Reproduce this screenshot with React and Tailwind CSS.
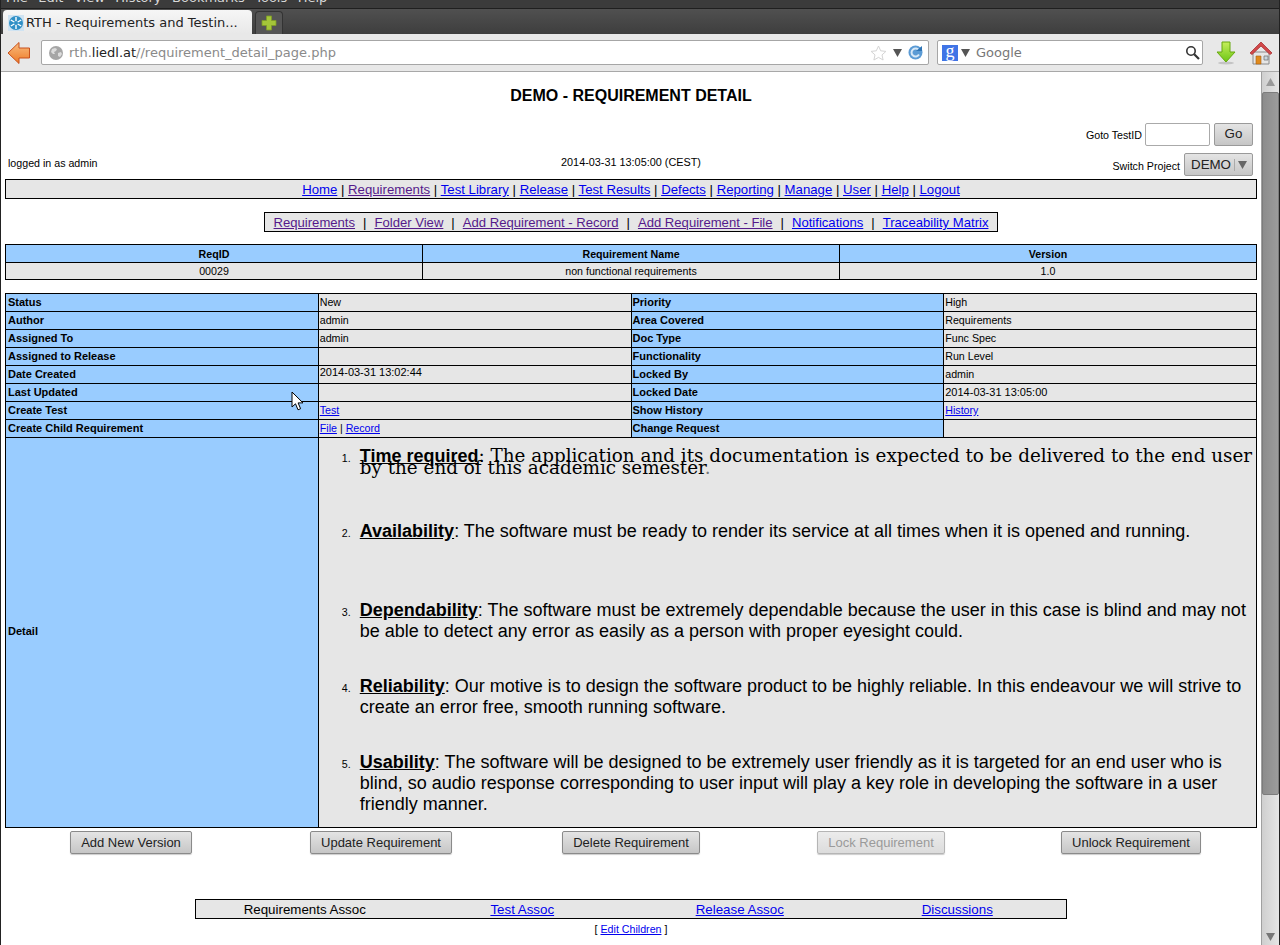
const SANS = 'font-["Liberation_Sans",Arial,sans-serif]';

const mainNav = [
  ['Home', false], ['Requirements', true], ['Test Library', false], ['Release', false], ['Test Results', false],
  ['Defects', false], ['Reporting', false], ['Manage', false], ['User', false], ['Help', false], ['Logout', false],
];

const subNav = [
  ['Requirements', true], ['Folder View', true], ['Add Requirement - Record', true],
  ['Add Requirement - File', true], ['Notifications', false], ['Traceability Matrix', false],
];

const detailRows = [
  ['Status', 'New', 'Priority', 'High'],
  ['Author', 'admin', 'Area Covered', 'Requirements'],
  ['Assigned To', 'admin', 'Doc Type', 'Func Spec'],
  ['Assigned to Release', '', 'Functionality', 'Run Level'],
  ['Date Created', <span key="c" className="inline-block text-[11px] -translate-y-[2px]">2014-03-31 13:02:44</span>, 'Locked By', 'admin'],
  ['Last Updated', '', 'Locked Date', <span key="l" className="text-[11px]">2014-03-31 13:05:00</span>],
  ['Create Test', <a key="t" className="text-[#0000ee] underline">Test</a>, 'Show History', <a key="h" className="text-[#0000ee] underline">History</a>],
  ['Create Child Requirement', <span key="f"><a className="text-[#0000ee] underline">File</a> | <a className="text-[#0000ee] underline">Record</a></span>, 'Change Request', ''],
];

const actions = [
  ['Add New Version', false], ['Update Requirement', false], ['Delete Requirement', false],
  ['Lock Requirement', true], ['Unlock Requirement', false],
];

const Favicon = () => (
  <svg width="16" height="16" viewBox="0 0 16 16" className="shrink-0">
    <rect width="16" height="16" fill="#cfe3f2" />
    <circle cx="8" cy="8" r="7" fill="#2f8fc6" />
    <path d="M8 2v12M2.800 5l10.400 6M2.800 11l10.400-6" stroke="#fff" strokeWidth="1.400" />
    <circle cx="8" cy="8" r="2" fill="#2f8fc6" />
  </svg>
);

const PlusIcon = () => (
  <svg width="16" height="16" viewBox="0 0 16 16">
    <path d="M5.500 1h5v4.500H15v5h-4.500V15h-5v-4.500H1v-5h4.500z" fill="#a4c639" stroke="#7f9c26" strokeWidth="0.800" />
  </svg>
);

const BackArrow = () => (
  <svg width="24" height="24" viewBox="0 0 24 24" className="shrink-0">
    <defs>
      <linearGradient id="backFill" x1="0" y1="0" x2="0" y2="1">
        <stop offset="0" stopColor="#f9bd80" />
        <stop offset="1" stopColor="#ee7a26" />
      </linearGradient>
    </defs>
    <path d="M1 12 12 1.500v5.500h10.500v10H12v5.500z" fill="url(#backFill)" stroke="#c8501c" strokeWidth="1" />
  </svg>
);

const Globe = () => (
  <svg width="14" height="14" viewBox="0 0 14 14">
    <circle cx="7" cy="7" r="7" fill="#a6a6a6" />
    <path d="M3 3l3-1 2 1-1 2-2 1 1 2-2 0-2-2zM9 7l3-1 1 2-2 3-2-1z" fill="#dcdcdc" />
  </svg>
);

const Star = () => (
  <svg width="17" height="16" viewBox="0 0 17 16">
    <path d="M8.500 1l2.200 4.800 5.200.6-3.900 3.500 1.100 5.100-4.600-2.600L3.900 15 5 9.900 1.100 6.400l5.200-.6z" fill="#fff" stroke="#d4d4d4" />
  </svg>
);

const Caret = ({ color = '#555' }) => (
  <svg width="9" height="8" viewBox="0 0 9 8">
    <path d="M0 0h9L4.500 8z" fill={color} />
  </svg>
);

const Reload = () => (
  <svg width="15" height="15" viewBox="0 0 15 15">
    <circle cx="7.500" cy="7.500" r="7" fill="#5b9bd5" />
    <path d="M11 5.500a4 4 0 1 0 0 4" fill="none" stroke="#d7e8f7" strokeWidth="2" />
    <path d="M8 6h6V1z" fill="#2f75b5" />
  </svg>
);

const SearchIcon = () => (
  <svg width="15" height="15" viewBox="0 0 15 15">
    <circle cx="6" cy="6" r="4.200" fill="#fff" stroke="#333" strokeWidth="1.600" />
    <path d="M9.200 9.200 14 14" stroke="#333" strokeWidth="2.200" />
  </svg>
);

const DownArrow = () => (
  <svg width="20" height="24" viewBox="0 0 20 24" className="shrink-0">
    <defs>
      <linearGradient id="downFill" x1="0" y1="0" x2="0" y2="1">
        <stop offset="0" stopColor="#c6ee5a" />
        <stop offset="1" stopColor="#6cc614" />
      </linearGradient>
    </defs>
    <ellipse cx="10" cy="22" rx="8" ry="1.500" fill="#c4c4c4" />
    <path d="M6 1h8v10h5L10 21 1 11h5z" fill="url(#downFill)" stroke="#66a80f" />
  </svg>
);

const HomeIcon = () => (
  <svg width="24" height="24" viewBox="0 0 24 24" className="shrink-0">
    <path d="M4 11h16v12H4z" fill="#e6e6e6" stroke="#8a8a8a" />
    <path d="M1 12 12 1l11 11-2 1.500L12 5l-9 8.500z" fill="#d2484a" stroke="#a83234" strokeWidth="0.800" />
    <path d="M7 15h5v8H7z" fill="#e08a1c" stroke="#a86010" strokeWidth="0.600" />
    <path d="M15 15h4v4h-4z" fill="#c9d6de" stroke="#777" strokeWidth="0.800" />
  </svg>
);

const Cursor = () => (
  <svg width="14" height="21" viewBox="0 0 14 21">
    <path d="M1 1v15l3.500-3.200 2.500 6 2.600-1.100-2.500-5.800H12z" fill="#fff" stroke="#000" strokeWidth="1" />
  </svg>
);

const ActionButton = ({ label, disabled }) => (
  <button className={`h-[23px] px-[10px] border rounded-[2px] text-[13px] bg-gradient-to-b shadow-[0_1px_1px_rgba(0,0,0,0.2)] ${disabled ? 'border-[#b5b5b5] from-[#ececec] to-[#dcdcdc] text-[#9a9a9a]' : 'border-[#8a8a8a] from-[#e4e4e4] to-[#c6c6c6] text-[#222]'}`}>
    {label}
  </button>
);

const BrowserChrome = () => (
  <div className={`shrink-0 font-["DejaVu_Sans",sans-serif]`}>
    <div className="h-[9px] overflow-hidden bg-[#3b3b3b] border-b border-[#1f1f1f]">
      <div className="flex gap-[10.5px] pl-[5px] -mt-[10px] text-[13px] leading-[15px] text-[#d8d8d8]">
        {['File', 'Edit', 'View', 'History', 'Bookmarks', 'Tools', 'Help'].map((m) => (
          <span key={m}>{m}</span>
        ))}
      </div>
    </div>
    <div className="h-[25px] flex items-end gap-[3px] pl-[2px] bg-gradient-to-b from-[#505050] to-[#3e3e3e]">
      <div className="w-[249px] h-[24px] pt-[1px] flex items-center gap-[2px] pl-[5px] bg-gradient-to-b from-[#f6f6f6] to-[#e8e8e8] rounded-t-[4px] text-[13px] text-[#222] whitespace-nowrap">
        <Favicon />
        <span>RTH - Requirements and Testin...</span>
      </div>
      <div className="w-[28px] h-[23px] flex items-center justify-center bg-[#555] border border-b-0 border-[#333] rounded-t-[4px]">
        <PlusIcon />
      </div>
    </div>
    <div className="h-[38px] flex items-center bg-[#e8e8e8] border-b border-[#a8a8a8] pl-[6px]">
      <BackArrow />
      <div className="ml-[10px] w-[888px] shrink-0 h-[25px] flex items-center bg-white border border-[#a6a6a6] rounded-[2px] pl-[7px] pr-[5px] text-[13px] text-[#8a8a8a]">
        <Globe />
        <span className="ml-[6px]">rth.<span className="text-[#222]">liedl.at</span>//requirement_detail_page.php</span>
        <span className="ml-auto flex items-center gap-[6px]">
          <Star />
          <Caret />
          <Reload />
        </span>
      </div>
      <div className="ml-[8px] w-[266px] shrink-0 h-[25px] flex items-center bg-white border border-[#a6a6a6] rounded-[2px] pl-[4px] pr-[2px] text-[13px] text-[#777]">
        <span className={`w-[16px] h-[16px] bg-[#3f74e6] text-white text-[18px] leading-[13px] text-center ${'font-["Liberation_Serif",serif]'}`}>g</span>
        <span className="ml-[3px]"><Caret /></span>
        <span className="ml-[6px]">Google</span>
        <span className="ml-auto"><SearchIcon /></span>
      </div>
      <div className="ml-[13px]"><DownArrow /></div>
      <div className="ml-[13px]"><HomeIcon /></div>
    </div>
  </div>
);

const Scrollbar = () => (
  <div className="w-[18px] shrink-0 flex flex-col bg-gradient-to-r from-[#cfcfcf] to-[#e6e6e6] border-l border-[#a0a0a0]">
    <div className="h-[20px] flex items-center justify-center">
      <span className="rotate-180 flex"><Caret color="#9a9a9a" /></span>
    </div>
    <div className="h-[703px] bg-gradient-to-r from-[#8c8c8c] to-[#9c9c9c] border border-[#7c7c7c] rounded-[2px]"></div>
    <div className="flex-1"></div>
    <div className="h-[17px] flex items-center justify-center">
      <Caret color="#777" />
    </div>
  </div>
);

const App = () => {
  return (
    <div className={`w-[1280px] h-[945px] overflow-hidden flex flex-col relative bg-white border-x border-[#222] ${SANS}`}>
      <BrowserChrome />
      <div className="flex flex-1 min-h-0">
        <main className="flex-1 min-w-0 pl-[4px] pr-[4px] text-black">
          <h1 className="pt-[15px] h-[50px] text-center text-[16px] leading-[18px] font-bold">DEMO - REQUIREMENT DETAIL</h1>

          <div className="h-[24px] flex items-center justify-end pr-[4px] text-[10.67px]">
            <span className="mr-[3px] pt-[2px]">Goto TestID</span>
            <span className="w-[65px] h-[23px] bg-white border border-[#aaa] rounded-[2px]"></span>
            <button className="ml-[4px] w-[39px] h-[23px] border border-[#9a9a9a] rounded-[2px] text-[13.33px] bg-gradient-to-b from-[#e4e4e4] to-[#c6c6c6] text-[#222]">Go</button>
          </div>

          <div className="mt-[7px] h-[23px] grid grid-cols-3 items-center text-[10.67px]">
            <span className="pl-[3px] pb-[4px]">logged in as admin</span>
            <span className="text-center text-[10.85px] pb-[4px]">2014-03-31 13:05:00 (CEST)</span>
            <span className="flex items-center justify-end pr-[4px]">
              <span className="mr-[4px] pt-[2px]">Switch Project</span>
              <span className="w-[69px] h-[23px] flex items-center pl-[6px] border border-[#9a9a9a] rounded-[2px] text-[13.33px] bg-gradient-to-b from-[#e4e4e4] to-[#c6c6c6] text-[#222]">
                DEMO
                <span className="ml-[3px] pl-[3px] border-l border-[#aaa] flex items-center h-[12px]"><Caret color="#666" /></span>
              </span>
            </span>
          </div>

          <nav className="mt-[3px] h-[20px] pt-[2px] flex items-center justify-center border border-black bg-[#e6e6e6] text-[13.2px] leading-[16px] whitespace-pre">
            {mainNav.map(([label, visited], i) => (
              <span key={label}>
                {i > 0 && ' | '}
                <a className={`underline ${visited ? 'text-[#551a8b]' : 'text-[#0000ee]'}`}>{label}</a>
              </span>
            ))}
          </nav>

          <div className="mt-[13px] flex justify-center">
            <nav className="w-[734px] h-[20px] pt-[2px] flex items-center justify-center border border-black bg-[#e6e6e6] text-[13.1px] leading-[16px] whitespace-pre">
              {subNav.map(([label, visited], i) => (
                <span key={label}>
                  {i > 0 && <span className="px-[8px]">|</span>}
                  <a className={`underline ${visited ? 'text-[#551a8b]' : 'text-[#0000ee]'}`}>{label}</a>
                </span>
              ))}
            </nav>
          </div>

          <table className="mt-[12px] w-[1252px] table-fixed border-collapse text-[10.67px] leading-[14px] text-center">
            <thead>
              <tr className="h-[18px] bg-[#99ccff] font-bold">
                <th className="border border-black p-0">ReqID</th>
                <th className="border border-black p-0">Requirement Name</th>
                <th className="border border-black p-0">Version</th>
              </tr>
            </thead>
            <tbody>
              <tr className="h-[17px] bg-[#e6e6e6]">
                <td className="border border-black p-0">00029</td>
                <td className="border border-black p-0">non functional requirements</td>
                <td className="border border-black p-0">1.0</td>
              </tr>
            </tbody>
          </table>

          <table className="mt-[13px] w-[1252px] table-fixed border-collapse text-[10.67px] leading-[14px]">
            <tbody>
              {detailRows.map((row) => (
                <tr key={row[0]} className="h-[18px]">
                  <td className="border border-black bg-[#99ccff] text-[11px] font-bold px-[2px] pt-0 pb-[1px]">{row[0]}</td>
                  <td className="border border-black bg-[#e6e6e6] px-[1px] pt-0 pb-[1px]">{row[1]}</td>
                  <td className="border border-black bg-[#99ccff] text-[11px] font-bold px-[1px] pt-0 pb-[1px]">{row[2]}</td>
                  <td className="border border-black bg-[#e6e6e6] px-[1px] pt-0 pb-[1px]">{row[3]}</td>
                </tr>
              ))}
              <tr className="h-[390px]">
                <td className="border border-black bg-[#99ccff] text-[11px] font-bold px-[2px] pt-0 pb-[3px]">Detail</td>
                <td colSpan={3} className="border border-black bg-[#e6e6e6] p-0 align-top">
                  <ol className="pl-[41px] pr-[2px] text-[18px] leading-[21px]">
                    <li className="relative pt-[12px] h-[83px] font-['DejaVu_Serif',serif] text-[18.35px] leading-[12px]">
                      <span className="absolute -left-[18px] top-[14px] text-[10.67px] font-['Liberation_Sans',sans-serif]">1.</span>
                      <b className="font-['Liberation_Sans',sans-serif] text-[18px] underline">Time required</b>: The application and its documentation is expected to be delivered to the end user by the end of this academic semester<span className="text-[#777]">.</span>
                    </li>
                    <li className="relative h-[79px]">
                      <span className="absolute -left-[18px] top-[2px] text-[10.67px]">2.</span>
                      <b className="underline">Availability</b>: The software must be ready to render its service at all times when it is opened and running.
                    </li>
                    <li className="relative h-[76px]">
                      <span className="absolute -left-[18px] top-[2px] text-[10.67px]">3.</span>
                      <b className="underline">Dependability</b>: The software must be extremely dependable because the user in this case is blind and may not be able to detect any error as easily as a person with proper eyesight could.
                    </li>
                    <li className="relative h-[76px]">
                      <span className="absolute -left-[18px] top-[2px] text-[10.67px]">4.</span>
                      <b className="underline">Reliability</b>: Our motive is to design the software product to be highly reliable. In this endeavour we will strive to create an error free, smooth running software.
                    </li>
                    <li className="relative">
                      <span className="absolute -left-[18px] top-[2px] text-[10.67px]">5.</span>
                      <b className="underline">Usability</b>: The software will be designed to be extremely user friendly as it is targeted for an end user who is blind, so audio response corresponding to user input will play a key role in developing the software in a user friendly manner.
                    </li>
                  </ol>
                </td>
              </tr>
            </tbody>
          </table>

          <div className="mt-[3px] w-[1250px] ml-[1px] grid grid-cols-5 justify-items-center">
            {actions.map(([label, disabled]) => (
              <ActionButton key={label} label={label} disabled={disabled} />
            ))}
          </div>

          <div className="mt-[45px] flex justify-center">
            <div className="w-[872px] h-[20px] grid grid-cols-4 items-center text-center border border-black bg-[#e6e6e6] text-[13.33px]">
              <span>Requirements Assoc</span>
              <a className="text-[#0000ee] underline">Test Assoc</a>
              <a className="text-[#0000ee] underline">Release Assoc</a>
              <a className="text-[#0000ee] underline">Discussions</a>
            </div>
          </div>
          <div className="mt-[2px] text-center text-[10.67px]">
            [ <a className="text-[#0000ee] underline">Edit Children</a> ]
          </div>
        </main>
        <Scrollbar />
      </div>
      {/* mouse pointer sits on top of the table */}
      <div className="absolute left-[290px] top-[391px]"><Cursor /></div>
    </div>
  );
};

export default App;
